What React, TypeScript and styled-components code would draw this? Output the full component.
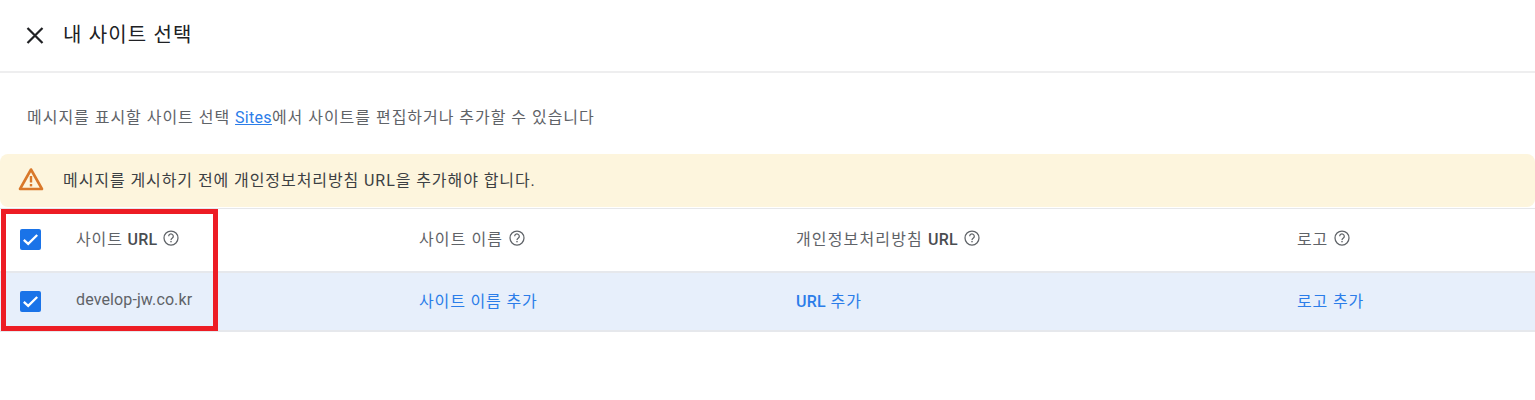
import React from "react";
import styled, { createGlobalStyle } from "styled-components";

const Global = createGlobalStyle`
  html, body { margin: 0; padding: 0; background: #fff; }
  body { font-family: Roboto, "Noto Sans CJK KR", sans-serif; color: #3c4043; }
`;

const Page = styled.div`
  position: relative;
  width: 1535px;
  height: 400px;
  overflow: hidden;
  background: #fff;
`;

const Header = styled.header`
  display: flex;
  align-items: center;
  height: 71px;
  padding-left: 24px;
  gap: 17px;
  border-bottom: 2px solid #eeeeef;
`;

const CloseButton = styled.span`
  display: flex;
  width: 22px;
  height: 22px;
  margin-top: -1px;
  color: #202124;
`;

const Title = styled.h1`
  margin: 0 0 5px;
  font-size: 20px;
  font-weight: 400;
  color: #202124;
  letter-spacing: 1.15px;
`;

const Description = styled.p`
  margin: 0;
  padding: 34px 0 25px 27px;
  height: 22px;
  line-height: 22px;
  font-size: 16px;
  color: #5f6368;
  letter-spacing: 0.97px;
`;

const SiteLink = styled.a`
  color: #2b7de9;
  text-decoration: underline;
  letter-spacing: 0.3px;
`;

const Banner = styled.div`
  display: flex;
  align-items: center;
  height: 50px;
  padding: 0 0 3px 17px;
  gap: 18px;
  background: #fdf5dd;
  border-radius: 8px;
  font-size: 16px;
  color: #3c4043;
  letter-spacing: 0.92px;
`;

const Table = styled.div`
  margin-top: 1px;
  border-top: 1px solid #e6e7e9;
`;

const Row = styled.div<{ $selected?: boolean; $height: number }>`
  display: grid;
  grid-template-columns: 76px 343px 377px 501px 1fr;
  align-items: center;
  height: ${(p) => p.$height}px;
  padding-bottom: 4px;
  background: ${(p) => (p.$selected ? "#e7effb" : "#fff")};
  border-bottom: 2px solid #e6e8ec;
`;

const CheckCell = styled.div`
  display: flex;
  padding-left: 20px;
  margin-top: 3px;
`;

const Check = styled.span`
  display: flex;
  align-items: center;
  justify-content: center;
  width: 21px;
  height: 21px;
  border-radius: 2px;
  background: #1a73e8;
`;

const HeadCell = styled.div<{ $spacing?: number }>`
  display: flex;
  align-items: center;
  gap: 6px;
  font-size: 16px;
  color: #5f6368;
  letter-spacing: ${(p) => p.$spacing ?? 0.85}px;
`;

const Strong = styled.b`
  font-weight: 500;
  color: #4a4d51;
  letter-spacing: 0.2px;
`;

const SiteCell = styled.div`
  font-size: 16px;
  color: #5f6368;
  letter-spacing: 0.12px;
`;

const LinkCell = styled.a`
  font-size: 16px;
  color: #2b7de9;
  letter-spacing: 0.85px;
`;

const LinkStrong = styled.b`
  font-weight: 500;
  letter-spacing: 0.2px;
`;

const Highlight = styled.div`
  position: absolute;
  left: 1px;
  top: 209px;
  width: 207px;
  height: 112px;
  border: 5px solid #ed1c24;
`;

const CheckMark = () => (
  <Check>
    <svg width="19" height="19" viewBox="0 0 19 19" fill="none">
      <path d="M2.8 9.8l4.4 4L16.2 5" stroke="#fff" strokeWidth="2.3" />
    </svg>
  </Check>
);

const Help = () => (
  <svg width="16" height="16" viewBox="0 0 16 16" fill="none">
    <circle cx="8" cy="8" r="7" stroke="#5f6368" strokeWidth="1.25" />
    <path d="M5.7 6.3a2.3 2.3 0 1 1 3.7 1.8C8.5 8.8 8 9.2 8 10" stroke="#5f6368" strokeWidth="1.25" />
    <rect x="7.3" y="10.9" width="1.4" height="1.4" fill="#5f6368" />
  </svg>
);

export default function App() {
  return (
    <Page>
      <Global />
      <Header>
        <CloseButton>
          <svg width="22" height="22" viewBox="0 0 22 22" fill="none">
            <path d="M3.5 4l15 15M18.5 4l-15 15" stroke="currentColor" strokeWidth="2.2" />
          </svg>
        </CloseButton>
        <Title>내 사이트 선택</Title>
      </Header>
      <Description>
        메시지를 표시할 사이트 선택 <SiteLink>Sites</SiteLink>에서 사이트를 편집하거나 추가할 수 있습니다
      </Description>
      <Banner>
        <svg width="28" height="26" viewBox="0 0 28 26" fill="none">
          <path d="M14 3.5L25 23H3z" stroke="#d9782a" strokeWidth="2.6" strokeLinejoin="round" />
          <rect x="12.8" y="10" width="2.4" height="6.5" fill="#d9782a" />
          <rect x="12.8" y="18" width="2.4" height="2.4" fill="#d9782a" />
        </svg>
        메시지를 게시하기 전에 개인정보처리방침 URL을 추가해야 합니다.
      </Banner>
      <Table>
        <Row $height={58}>
          <CheckCell><CheckMark /></CheckCell>
          <HeadCell><span>사이트 <Strong>URL</Strong></span><Help /></HeadCell>
          <HeadCell $spacing={1.1}>사이트 이름<Help /></HeadCell>
          <HeadCell $spacing={1.15}><span>개인정보처리방침 <Strong>URL</Strong></span><Help /></HeadCell>
          <HeadCell>로고<Help /></HeadCell>
        </Row>
        <Row $height={53} $selected>
          <CheckCell><CheckMark /></CheckCell>
          <SiteCell>develop-jw.co.kr</SiteCell>
          <LinkCell>사이트 이름 추가</LinkCell>
          <LinkCell><LinkStrong>URL</LinkStrong> 추가</LinkCell>
          <LinkCell>로고 추가</LinkCell>
        </Row>
      </Table>
      <Highlight />
    </Page>
  );
}
